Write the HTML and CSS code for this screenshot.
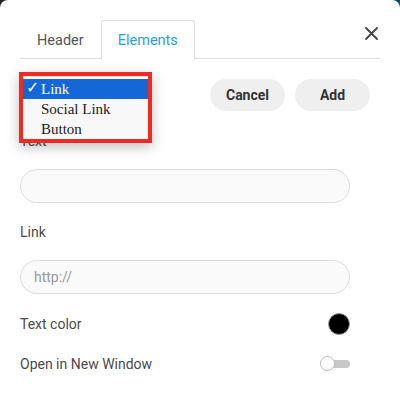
FILE: index.html
```html
<!DOCTYPE html>
<html lang="en">
<head>
    <meta charset="UTF-8">
    <meta name="viewport" content="width=device-width, initial-scale=1.0">
    <title>Edit Element</title>
    <link rel="stylesheet" href="styles.css">
</head>
<body>
    <div class="dialog">
        <div class="tabs">
            <div class="tab">Header</div>
            <div class="tab active">Elements</div>
            <button class="close" aria-label="Close">
                <svg width="13" height="13" viewBox="0 0 13 13">
                    <path d="M1 1 L12 12 M12 1 L1 12" stroke="#444" stroke-width="1.8" stroke-linecap="round"/>
                </svg>
            </button>
        </div>

        <div class="toolbar">
            <button class="btn">Cancel</button>
            <button class="btn">Add</button>
        </div>

        <div class="form">
            <div class="form-group">
                <label for="text">Text</label>
                <input type="text" id="text" class="field">
            </div>
            <div class="form-group">
                <label for="link">Link</label>
                <input type="text" id="link" class="field" placeholder="http://">
            </div>
            <div class="option-row">
                <span>Text color</span>
                <span class="swatch"></span>
            </div>
            <div class="option-row">
                <span>Open in New Window</span>
                <span class="toggle"><span class="knob"></span></span>
            </div>
        </div>

        <div class="type-menu">
            <ul>
                <li class="selected"><span class="check">✓</span>Link</li>
                <li>Social Link</li>
                <li>Button</li>
            </ul>
        </div>
    </div>
</body>
</html>
```

FILE: styles.css
```css
html, body {
    margin: 0;
    padding: 0;
}
body {
    background: linear-gradient(to right, #222 0%, #1d3b40 60%, #0b4d55 100%);
    font-family: Roboto, 'Liberation Sans', sans-serif;
    color: #444;
}
.dialog {
    position: relative;
    box-sizing: border-box;
    width: 400px;
    height: 412px;
    background-color: white;
    border-radius: 8px 8px 0 0;
    padding: 20px;
}
.tabs {
    display: flex;
    align-items: stretch;
    height: 38px;
    border-bottom: 1px solid #ddd;
}
.tab {
    display: flex;
    align-items: center;
    padding: 0 16px;
    font-size: 14.5px;
    color: #555;
    border: 1px solid transparent;
    border-bottom: none;
    border-radius: 3px 3px 0 0;
    margin-bottom: -1px;
}
.tab.active {
    color: #2a9fe0;
    border-color: #ddd;
    background-color: white;
    height: 38px;
}
.close {
    margin-left: auto;
    align-self: flex-start;
    margin-top: 7px;
    margin-right: 2px;
    padding: 0;
    border: none;
    background: none;
    line-height: 0;
    cursor: pointer;
}
.toolbar {
    display: flex;
    justify-content: flex-end;
    gap: 10px;
    margin-top: 20px;
    margin-right: 10px;
}
.btn {
    width: 75px;
    height: 32px;
    border: none;
    border-radius: 16px;
    background-color: #efefef;
    color: #333;
    font-family: Roboto, 'Liberation Sans', sans-serif;
    font-size: 14px;
    font-weight: bold;
    cursor: pointer;
}
.form {
    width: 330px;
    margin-top: 20px;
}
.form-group {
    margin-bottom: 19px;
}
label, .option-row span {
    font-size: 14px;
    line-height: 20px;
    color: #4a4a4a;
}
label {
    display: block;
    margin-bottom: 18px;
}
.field {
    display: block;
    box-sizing: border-box;
    width: 100%;
    height: 34px;
    border: 1px solid #ddd;
    border-radius: 17px;
    background-color: #fafafa;
    padding: 0 13px;
    font-family: Roboto, 'Liberation Sans', sans-serif;
    font-size: 14px;
    color: #444;
}
.field::placeholder {
    color: #999;
}
.option-row {
    display: flex;
    justify-content: space-between;
    align-items: center;
    height: 22px;
    margin-top: 2px;
    margin-bottom: 18px;
}
.swatch {
    width: 20px;
    height: 20px;
    border-radius: 50%;
    background-color: black;
    border: 1px solid #999;
}
.toggle {
    position: relative;
    width: 30px;
    height: 16px;
    display: flex;
    align-items: center;
    justify-content: flex-end;
}
.toggle::before {
    content: "";
    width: 25px;
    height: 8px;
    border-radius: 4px;
    background-color: #c8c8c8;
}
.knob {
    position: absolute;
    left: 0;
    top: 0;
    box-sizing: border-box;
    width: 15px;
    height: 15px;
    border-radius: 50%;
    background-color: white;
    border: 1px solid #bbb;
}
.type-menu {
    position: absolute;
    left: 19px;
    top: 72px;
    width: 125px;
    border: 4px solid #ee2a22;
    box-shadow: 0 4px 12px rgba(0, 0, 0, 0.25);
}
.type-menu ul {
    list-style: none;
    margin: 0;
    padding: 2px 0 0;
    background-color: #f8f8f8;
    border-top: 1px solid #ddd;
    font-family: 'Liberation Serif', 'Times New Roman', serif;
    font-size: 15px;
    color: #222;
}
.type-menu li {
    height: 20px;
    line-height: 20px;
    padding-left: 18px;
    position: relative;
}
.type-menu li.selected {
    background-color: #1467d6;
    color: white;
}
.check {
    position: absolute;
    left: 3px;
    top: -1px;
    font-family: 'DejaVu Sans', sans-serif;
    font-size: 16px;
    font-weight: bold;
}
```
